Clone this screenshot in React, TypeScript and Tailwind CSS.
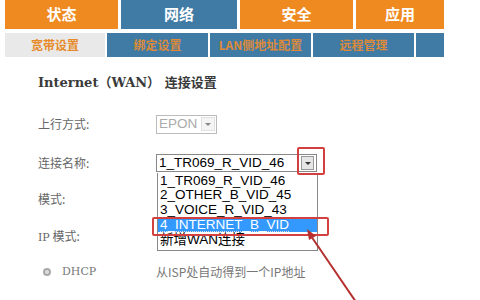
import React from 'react';

const cjk = '"Noto Sans CJK SC", "Noto Sans", sans-serif';
const serif = '"DejaVu Serif", "Noto Sans CJK SC", serif';

const topTabs = [
  { label: '状态', w: 'w-[113px]', bg: 'bg-[#ef8a21]' },
  { label: '网络', w: 'w-[116px]', bg: 'bg-[#3f7ba4]' },
  { label: '安全', w: 'w-[113px]', bg: 'bg-[#ef8a21]' },
  { label: '应用', w: 'w-[88px]', bg: 'bg-[#ef8a21]' },
];

const subTabs = [
  { label: '宽带设置', w: 'w-[100px]', bg: 'bg-[#e9e9e9]', fg: 'text-[#e68a2a]' },
  { label: '绑定设置', w: 'w-[101px]', bg: 'bg-[#3f7ba4]', fg: 'text-[#dc8a3a]' },
  { label: 'LAN侧地址配置', w: 'w-[101px]', bg: 'bg-[#3f7ba4]', fg: 'text-[#dc8a3a]' },
  { label: '远程管理', w: 'w-[101px]', bg: 'bg-[#3f7ba4]', fg: 'text-[#dc8a3a]' },
  { label: '', w: 'w-[28px]', bg: 'bg-[#3f7ba4]', fg: '' },
];

const options = ['1_TR069_R_VID_46', '2_OTHER_B_VID_45', '3_VOICE_R_VID_43', '4_INTERNET_B_VID', '新增WAN连接'];

const Arrow = () => (
  <svg width="10" height="10" viewBox="0 0 10 10">
    <path d="M2 4 L8 4 L5 7 Z" fill="#333" />
  </svg>
);

const Row = ({ label, className, children }: { label: React.ReactNode; className: string; children?: React.ReactNode }) => (
  <div className={`flex h-[20px] items-center ${className}`}>
    <div className="w-[118px] text-[12px] text-[#666]" style={{ fontFamily: cjk }}>{label}</div>
    {children}
  </div>
);

export default function App() {
  return (
    <div className="relative h-[300px] w-[480px] overflow-hidden bg-white" style={{ fontFamily: cjk }}>
      <div className="flex gap-[3px] pl-[5px]">
        {topTabs.map((t) => (
          <div key={t.label} className={`flex h-[29px] items-center justify-center text-[15px] font-bold text-white ${t.w} ${t.bg}`}>
            {t.label}
          </div>
        ))}
      </div>
      <div className="mt-[4px] flex gap-[2px] pl-[5px]">
        {subTabs.map((t, i) => (
          <div key={i} className={`flex h-[24px] items-center justify-center text-[12px] font-bold ${t.fg} ${t.w} ${t.bg}`}>
            {t.label}
          </div>
        ))}
      </div>

      <div className="pl-[38px]">
        <div className="mt-[15px] flex h-[22px] items-center text-[13px] font-bold text-[#3a3a3a]" style={{ fontFamily: serif }}>
          Internet（WAN） 连接设置
        </div>

        <Row label="上行方式:" className="mt-[20px]">
          <div className="flex h-[19px] w-[61px] items-center border border-[#bbb] pl-[2px] text-[13.5px] text-[#aaa]" style={{ fontFamily: '"Liberation Sans", sans-serif' }}>
            <span className="flex-1">EPON</span>
            <span className="mr-[1px] flex h-[14px] w-[14px] items-center justify-center border border-[#ccc] bg-[#eee] opacity-60">
              <Arrow />
            </span>
          </div>
        </Row>

        <Row label="连接名称:" className="mt-[19px]">
          <div className="flex h-[18px] w-[161px] items-center border border-[#888] pl-[2px] text-[13.5px] text-black" style={{ fontFamily: '"Liberation Sans", sans-serif' }}>
            <span className="flex-1">1_TR069_R_VID_46</span>
            <span className="mr-[2px] flex h-[14px] w-[13px] items-center justify-center border border-[#999] bg-[#e6e6e6]">
              <Arrow />
            </span>
          </div>
        </Row>

        <Row label="模式:" className="mt-[16px]" />

        <Row label={<><span style={{ fontFamily: serif }} className="text-[11px]">IP</span> 模式:</>} className="mt-[18px]" />

        <div className="mt-[15px] flex h-[20px] items-center">
          <div className="flex w-[118px] items-center">
            <span className="ml-[5px] h-[8px] w-[8px] rounded-full border-[2px] border-[#aaa] bg-[#ddd]" />
            <span className="ml-[11px] text-[11px] text-[#777]" style={{ fontFamily: serif }}>DHCP</span>
          </div>
          <span className="text-[12px] text-[#777]">从ISP处自动得到一个IP地址</span>
        </div>
      </div>

      {/* open dropdown list */}
      <div className="absolute left-[157px] top-[173px] w-[161px] border border-t-0 border-[#888] bg-white pb-[3px] text-[13.5px] text-black" style={{ fontFamily: '"Liberation Sans", "Noto Sans CJK SC", sans-serif' }}>
        {options.map((o, i) => (
          <div key={o} className={`flex h-[14.8px] items-center pl-[2px] leading-none ${i === 3 ? 'bg-[#3399ff] text-white' : ''}`}>
            <span className={i === 3 ? 'border-b border-dotted border-[#ddd]' : ''}>{o}</span>
          </div>
        ))}
      </div>

      {/* callout boxes */}
      <div className="absolute left-[297px] top-[147px] h-[28px] w-[28px] rounded-[2px] border-2 border-[#d2413f]" />
      <div className="absolute left-[152px] top-[217px] h-[19px] w-[177px] rounded-[2px] border-2 border-[#d2413f]" />

      <svg className="absolute left-0 top-0" width="480" height="300" viewBox="0 0 480 300">
        <line x1="356" y1="302" x2="311" y2="236" stroke="#b5302f" strokeWidth="2" />
        <path d="M307 229 L316 236 L309 240 Z" fill="#b5302f" />
      </svg>
    </div>
  );
}
